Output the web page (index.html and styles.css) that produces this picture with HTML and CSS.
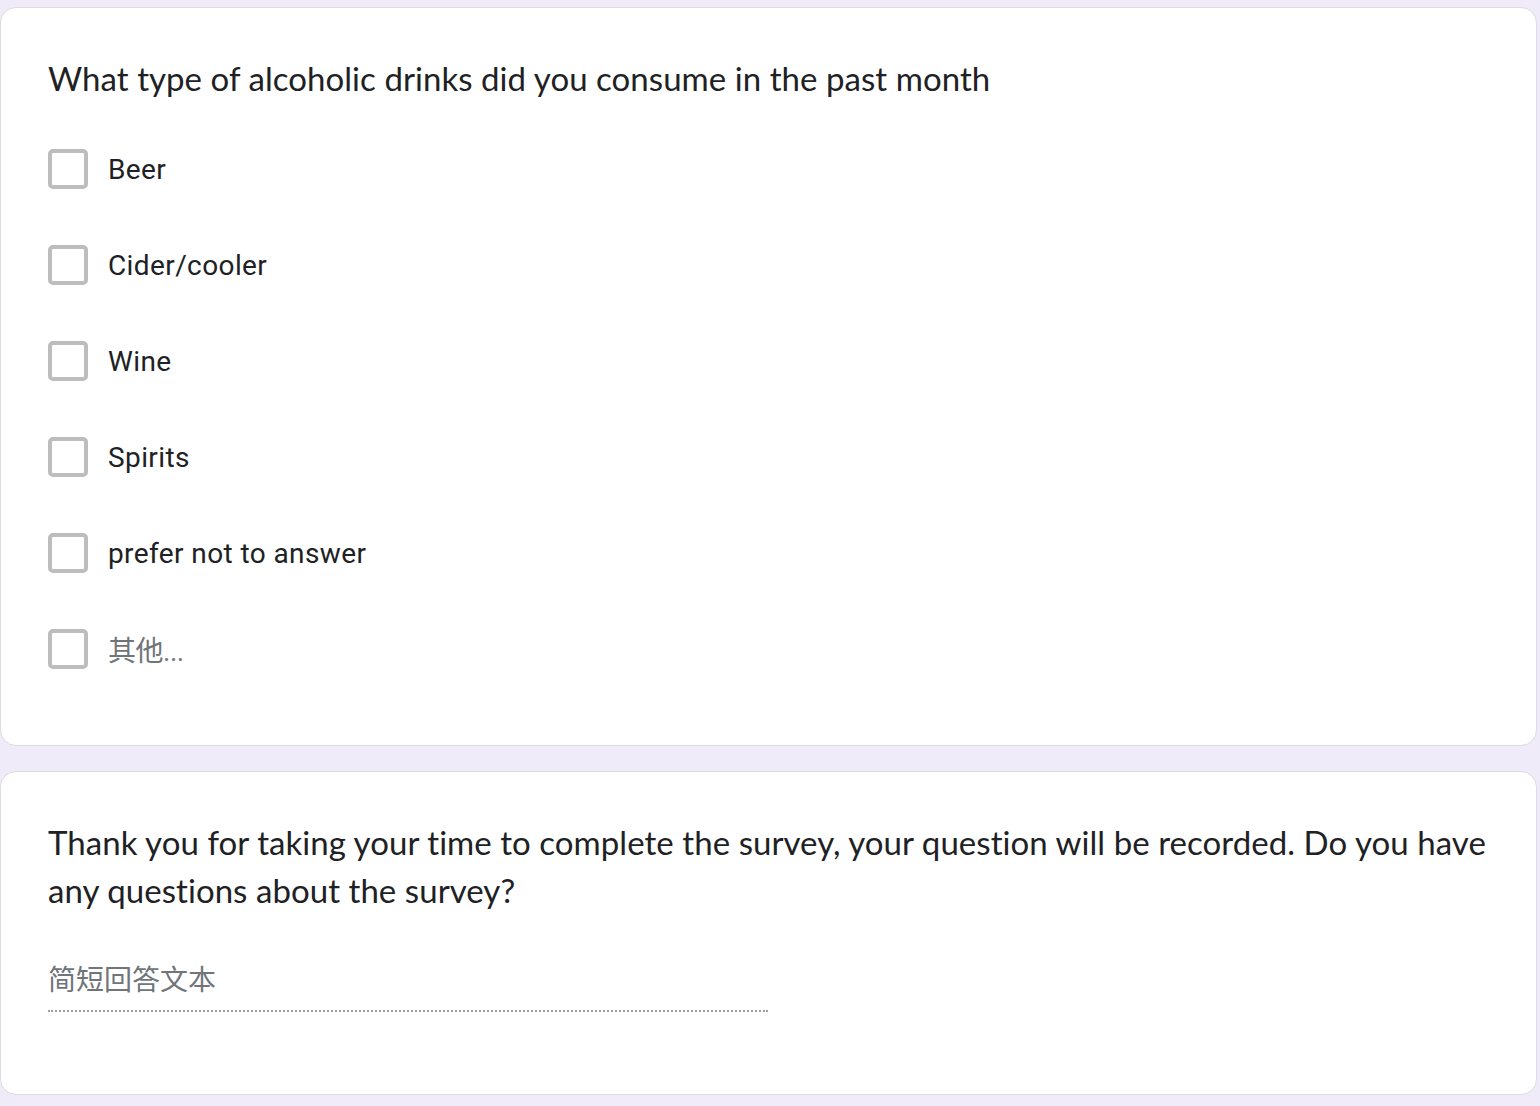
FILE: index.html
```html
<!DOCTYPE html>
<html lang="en">
<head>
<meta charset="utf-8">
<title>Survey</title>
<link rel="stylesheet" href="styles.css">
</head>
<body>
<div class="page">
  <section class="card">
    <div class="q-title">What type of alcoholic drinks did you consume in the past month</div>
    <div class="options">
      <div class="opt"><span class="box"></span><span class="label">Beer</span></div>
      <div class="opt"><span class="box"></span><span class="label">Cider/cooler</span></div>
      <div class="opt"><span class="box"></span><span class="label">Wine</span></div>
      <div class="opt"><span class="box"></span><span class="label">Spirits</span></div>
      <div class="opt"><span class="box"></span><span class="label">prefer not to answer</span></div>
      <div class="opt"><span class="box"></span><span class="label other">其他...</span></div>
    </div>
  </section>
  <section class="card card2">
    <div class="q-title">Thank you for taking your time to complete the survey, your question will be recorded. Do you have any questions about the survey?</div>
    <div class="input">简短回答文本</div>
  </section>
</div>
</body>
</html>
```
FILE: styles.css
```css
html, body {
  margin: 0;
  padding: 0;
  background: #f0ebf8;
}
.page {
  display: flex;
  flex-direction: column;
  gap: 25px;
  padding-top: 7px;
  width: 1537px;
}
.card {
  background: #fff;
  border: 1px solid #dadce0;
  border-radius: 16px;
  padding: 46px 48px 48px 47px;
}
.q-title {
  font-family: Lato, "Noto Sans", sans-serif;
  font-size: 33px;
  line-height: 48px;
  color: #202124;
  letter-spacing: 0.05px;
}
.options {
  margin-top: 19px;
  display: flex;
  flex-direction: column;
}
.opt {
  height: 96px;
  display: flex;
  align-items: center;
  gap: 20px;
}
.box {
  width: 32px;
  height: 32px;
  border: 4px solid #bdbdbd;
  border-radius: 5px;
  flex: none;
}
.label {
  font-family: Roboto, "Noto Sans CJK SC", sans-serif;
  font-size: 28px;
  letter-spacing: 0.4px;
  color: #202124;
}
.label.other {
  color: #70757a;
  letter-spacing: -0.5px;
}
.card2 {
  padding-bottom: 82px;
}
.input {
  margin-top: 43px;
  width: 720px;
  font-family: Roboto, "Noto Sans CJK SC", sans-serif;
  font-size: 28px;
  line-height: 48px;
  color: #70757a;
  padding-bottom: 5px;
  border-bottom: 2px dotted #9e9e9e;
}
```
